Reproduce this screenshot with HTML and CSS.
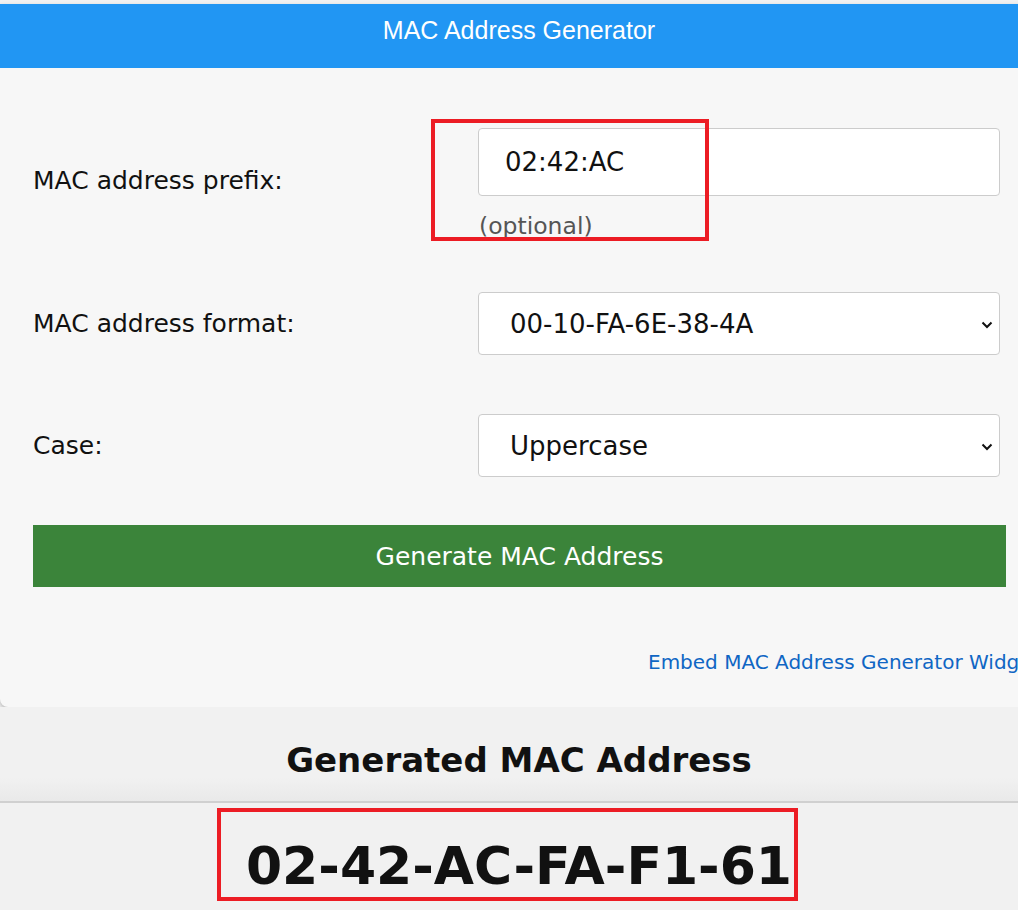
FILE: index.html
```html
<!DOCTYPE html>
<html>
<head>
<meta charset="utf-8">
<link rel="stylesheet" href="styles.css">
</head>
<body>
<div class="page">
  <div class="card">
    <div class="header">MAC Address Generator</div>
    <div class="form">
      <div class="row row-prefix">
        <label class="label">MAC address prefix:</label>
        <div class="field">
          <div class="input">02:42:AC</div>
          <div class="hint">(optional)</div>
        </div>
      </div>
      <div class="row">
        <label class="label">MAC address format:</label>
        <div class="field">
          <div class="select"><span>00-10-FA-6E-38-4A</span><svg class="chev" width="12" height="8" viewBox="0 0 12 8"><path d="M1.5 1.5 L6 6 L10.5 1.5" fill="none" stroke="#111" stroke-width="2"/></svg></div>
        </div>
      </div>
      <div class="row row-last">
        <label class="label">Case:</label>
        <div class="field">
          <div class="select"><span>Uppercase</span><svg class="chev" width="12" height="8" viewBox="0 0 12 8"><path d="M1.5 1.5 L6 6 L10.5 1.5" fill="none" stroke="#111" stroke-width="2"/></svg></div>
        </div>
      </div>
      <div class="button">Generate MAC Address</div>
      <div class="embed"><a href="#">Embed MAC Address Generator Widget</a></div>
    </div>
  </div>
  <h2 class="result-title">Generated MAC Address</h2>
  <div class="result">
    <div class="mac">02-42-AC-FA-F1-61</div>
  </div>
  <div class="mark mark-prefix"></div>
  <div class="mark mark-result"></div>
</div>
</body>
</html>
```

FILE: styles.css
```css
html {
  overflow: hidden;
}
body {
  margin: 0;
  padding: 0;
  background: #f1f1f1;
}
.page {
  position: relative;
  width: 1038px;
  min-height: 906px;
  padding-top: 4px;
  font-family: "DejaVu Sans", Verdana, sans-serif;
  color: #111;
}
.card {
  background: #f7f7f7;
  border-radius: 0 0 8px 8px;
  box-shadow: 0 2px 4px rgba(0,0,0,0.25);
}
.header {
  background: #2196f3;
  color: #fff;
  height: 64px;
  text-align: center;
  font-family: "Liberation Sans", Arial, sans-serif;
  font-size: 25px;
  line-height: 52px;
}
.form {
  padding: 60px 32px 33px 33px;
}
.row {
  display: flex;
  align-items: center;
  margin-bottom: 59px;
}
.row-prefix {
  align-items: flex-start;
  margin-bottom: 51px;
}
.row-last {
  margin-bottom: 48px;
}
.label {
  width: 445px;
  font-size: 25px;
  line-height: 30px;
}
.row-prefix .label {
  padding-top: 38px;
}
.field {
  width: 522px;
}
.input, .select {
  box-sizing: border-box;
  background: #fff;
  border: 1px solid #cccccc;
  border-radius: 4px;
  font-size: 26px;
  display: flex;
  align-items: center;
}
.input {
  height: 68px;
  padding-left: 26px;
}
.select {
  height: 63px;
  padding-left: 31px;
  padding-right: 6px;
  justify-content: space-between;
}
.chev {
  margin-top: 2px;
}
.hint {
  margin-top: 15px;
  font-size: 23.5px;
  line-height: 30px;
  color: #555;
  padding-left: 1px;
}
.button {
  height: 62px;
  width: 973px;
  background: #3b843a;
  color: #fff;
  font-size: 25px;
  display: flex;
  align-items: center;
  justify-content: center;
}
.embed {
  margin-top: 63px;
  padding-left: 615px;
  white-space: nowrap;
  font-size: 20px;
  line-height: 24px;
}
.embed a {
  color: #0f66c4;
  text-decoration: none;
}
.result-title {
  margin: 0;
  padding-top: 31px;
  padding-bottom: 19px;
  text-align: center;
  font-size: 34px;
  font-weight: bold;
  line-height: 44px;
  background: linear-gradient(#f1f1f1 75%, #e9e9e9);
}
.result {
  border-top: 2px solid #d0d0d0;
  text-align: center;
  padding-top: 33px;
}
.mac {
  font-size: 52px;
  font-weight: bold;
  line-height: 60px;
}
.mark {
  position: absolute;
  border: 4px solid #ec1c24;
  box-sizing: border-box;
}
.mark-prefix {
  left: 431px;
  top: 119px;
  width: 278px;
  height: 122px;
}
.mark-result {
  left: 217px;
  top: 808px;
  width: 581px;
  height: 93px;
}
```
